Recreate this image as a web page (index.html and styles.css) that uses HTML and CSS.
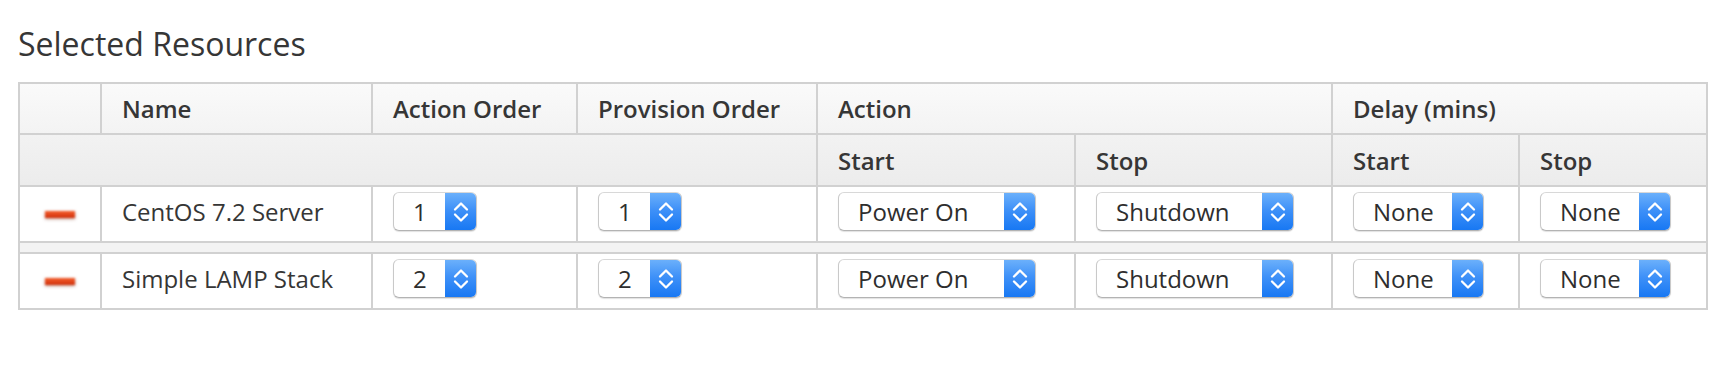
FILE: index.html
```html
<!DOCTYPE html>
<html lang="en">
<head>
    <meta charset="UTF-8">
    <title>Selected Resources</title>
    <link rel="stylesheet" href="styles.css">
</head>
<body>
    <h3 class="section-title">Selected Resources</h3>

    <table class="resources">
        <colgroup>
            <col style="width: 82px">
            <col style="width: 271px">
            <col style="width: 205px">
            <col style="width: 240px">
            <col style="width: 258px">
            <col style="width: 257px">
            <col style="width: 187px">
            <col style="width: 188px">
        </colgroup>
        <thead>
            <tr class="head-main">
                <th></th>
                <th>Name</th>
                <th>Action Order</th>
                <th>Provision Order</th>
                <th colspan="2">Action</th>
                <th colspan="2">Delay (mins)</th>
            </tr>
            <tr class="head-sub">
                <th colspan="4"></th>
                <th>Start</th>
                <th>Stop</th>
                <th>Start</th>
                <th>Stop</th>
            </tr>
        </thead>
        <tbody>
            <tr>
                <td class="remove-cell"><span class="remove"></span></td>
                <td>CentOS 7.2 Server</td>
                <td>
                    <div class="picker picker-num"><span class="picker-value">1</span><span class="picker-btn"><svg width="16" height="24" viewBox="0 0 16 24" fill="none" stroke="#fff" stroke-width="2.3" stroke-linecap="round" stroke-linejoin="round"><path d="M2 9.5 8 3.5l6 6"/><path d="M2 14.5 8 20.5l6-6"/></svg></span></div>
                </td>
                <td>
                    <div class="picker picker-num"><span class="picker-value">1</span><span class="picker-btn"><svg width="16" height="24" viewBox="0 0 16 24" fill="none" stroke="#fff" stroke-width="2.3" stroke-linecap="round" stroke-linejoin="round"><path d="M2 9.5 8 3.5l6 6"/><path d="M2 14.5 8 20.5l6-6"/></svg></span></div>
                </td>
                <td>
                    <div class="picker picker-wide"><span class="picker-value">Power On</span><span class="picker-btn"><svg width="16" height="24" viewBox="0 0 16 24" fill="none" stroke="#fff" stroke-width="2.3" stroke-linecap="round" stroke-linejoin="round"><path d="M2 9.5 8 3.5l6 6"/><path d="M2 14.5 8 20.5l6-6"/></svg></span></div>
                </td>
                <td>
                    <div class="picker picker-wide"><span class="picker-value">Shutdown</span><span class="picker-btn"><svg width="16" height="24" viewBox="0 0 16 24" fill="none" stroke="#fff" stroke-width="2.3" stroke-linecap="round" stroke-linejoin="round"><path d="M2 9.5 8 3.5l6 6"/><path d="M2 14.5 8 20.5l6-6"/></svg></span></div>
                </td>
                <td>
                    <div class="picker picker-delay"><span class="picker-value">None</span><span class="picker-btn"><svg width="16" height="24" viewBox="0 0 16 24" fill="none" stroke="#fff" stroke-width="2.3" stroke-linecap="round" stroke-linejoin="round"><path d="M2 9.5 8 3.5l6 6"/><path d="M2 14.5 8 20.5l6-6"/></svg></span></div>
                </td>
                <td>
                    <div class="picker picker-delay"><span class="picker-value">None</span><span class="picker-btn"><svg width="16" height="24" viewBox="0 0 16 24" fill="none" stroke="#fff" stroke-width="2.3" stroke-linecap="round" stroke-linejoin="round"><path d="M2 9.5 8 3.5l6 6"/><path d="M2 14.5 8 20.5l6-6"/></svg></span></div>
                </td>
            </tr>
            <tr class="spacer"><td colspan="8"></td></tr>
            <tr>
                <td class="remove-cell"><span class="remove"></span></td>
                <td>Simple LAMP Stack</td>
                <td>
                    <div class="picker picker-num"><span class="picker-value">2</span><span class="picker-btn"><svg width="16" height="24" viewBox="0 0 16 24" fill="none" stroke="#fff" stroke-width="2.3" stroke-linecap="round" stroke-linejoin="round"><path d="M2 9.5 8 3.5l6 6"/><path d="M2 14.5 8 20.5l6-6"/></svg></span></div>
                </td>
                <td>
                    <div class="picker picker-num"><span class="picker-value">2</span><span class="picker-btn"><svg width="16" height="24" viewBox="0 0 16 24" fill="none" stroke="#fff" stroke-width="2.3" stroke-linecap="round" stroke-linejoin="round"><path d="M2 9.5 8 3.5l6 6"/><path d="M2 14.5 8 20.5l6-6"/></svg></span></div>
                </td>
                <td>
                    <div class="picker picker-wide"><span class="picker-value">Power On</span><span class="picker-btn"><svg width="16" height="24" viewBox="0 0 16 24" fill="none" stroke="#fff" stroke-width="2.3" stroke-linecap="round" stroke-linejoin="round"><path d="M2 9.5 8 3.5l6 6"/><path d="M2 14.5 8 20.5l6-6"/></svg></span></div>
                </td>
                <td>
                    <div class="picker picker-wide"><span class="picker-value">Shutdown</span><span class="picker-btn"><svg width="16" height="24" viewBox="0 0 16 24" fill="none" stroke="#fff" stroke-width="2.3" stroke-linecap="round" stroke-linejoin="round"><path d="M2 9.5 8 3.5l6 6"/><path d="M2 14.5 8 20.5l6-6"/></svg></span></div>
                </td>
                <td>
                    <div class="picker picker-delay"><span class="picker-value">None</span><span class="picker-btn"><svg width="16" height="24" viewBox="0 0 16 24" fill="none" stroke="#fff" stroke-width="2.3" stroke-linecap="round" stroke-linejoin="round"><path d="M2 9.5 8 3.5l6 6"/><path d="M2 14.5 8 20.5l6-6"/></svg></span></div>
                </td>
                <td>
                    <div class="picker picker-delay"><span class="picker-value">None</span><span class="picker-btn"><svg width="16" height="24" viewBox="0 0 16 24" fill="none" stroke="#fff" stroke-width="2.3" stroke-linecap="round" stroke-linejoin="round"><path d="M2 9.5 8 3.5l6 6"/><path d="M2 14.5 8 20.5l6-6"/></svg></span></div>
                </td>
            </tr>
        </tbody>
    </table>
</body>
</html>
```

FILE: styles.css
```css
body {
    margin: 0;
    padding: 0 18px;
    font-family: "Open Sans", "Liberation Sans", sans-serif;
    color: #363636;
    background: #fff;
}

.section-title {
    font-size: 32px;
    font-weight: 400;
    line-height: 36px;
    margin: 0;
    padding: 26px 0 20px 0;
}

.resources {
    width: 1688px;
    table-layout: fixed;
    border-collapse: collapse;
    border: 2px solid #d1d1d1;
    font-size: 24px;
}

.resources th,
.resources td {
    border: 2px solid #d1d1d1;
    padding: 0 20px;
    text-align: left;
    vertical-align: middle;
    white-space: nowrap;
}

.resources th {
    font-weight: 600;
}

.head-main th {
    height: 49px;
    background: linear-gradient(to bottom, #fafafa, #f3f3f3);
}

.head-sub th {
    height: 50px;
    background: linear-gradient(to bottom, #f2f2f2, #ececec);
}

.resources tbody td {
    height: 49px;
    padding-bottom: 5px;
    padding-top: 0;
}

.resources tbody tr.spacer td {
    height: 9px;
    padding: 0;
    background: #f3f3f3;
}

.remove-cell {
    text-align: center !important;
}

.remove {
    display: inline-block;
    width: 30px;
    height: 7px;
    background: linear-gradient(to bottom, #f6602e, #cf2f0b);
    box-shadow: 0 1px 3px rgba(120, 30, 0, 0.5);
    filter: blur(0.8px);
    vertical-align: middle;
}

/* mac style select */
.picker {
    display: flex;
    height: 39px;
    box-sizing: border-box;
    border: 1px solid #c9c9c9;
    border-top-color: #d8d8d8;
    border-bottom-color: #b3b3b3;
    border-radius: 6px;
    background: #fff;
    box-shadow: 0 1px 1px rgba(0, 0, 0, 0.12);
    overflow: hidden;
    font-size: 24px;
    color: #2e2e2e;
}

.picker-num { width: 84px; }
.picker-wide { width: 198px; }
.picker-delay { width: 131px; }

.picker-value {
    flex: 1;
    padding-left: 19px;
    line-height: 37px;
}

.picker-btn {
    width: 31px;
    display: flex;
    align-items: center;
    justify-content: center;
    background: linear-gradient(to bottom, #6bb0fb, #3f91f8 45%, #1878f3);
}
```
